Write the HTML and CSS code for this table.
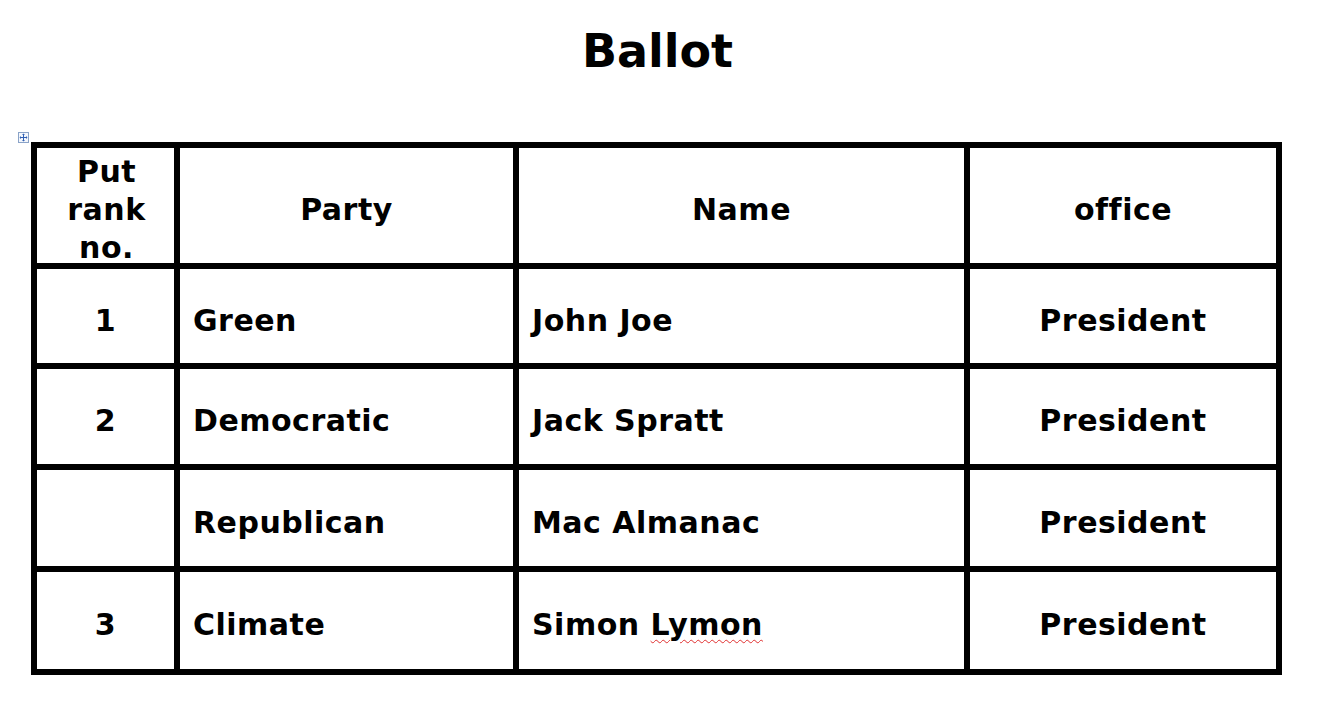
FILE: index.html
```html
<!DOCTYPE html>
<html lang="en">
<head>
<meta charset="utf-8">
<title>Ballot</title>
<link rel="stylesheet" href="styles.css">
</head>
<body>
<main class="page">
  <h1 class="title">Ballot</h1>
  <div class="table-wrap">
    <span class="move-handle" aria-hidden="true">
      <svg width="11" height="11" viewBox="0 0 11 11">
        <rect x="0.5" y="0.5" width="10" height="10" fill="#f4f7fc" stroke="#8aa3c8"/>
        <path d="M5.5 2v7M2 5.5h7" stroke="#2f5fb3" stroke-width="1"/>
        <path d="M5.5 1.5l1.5 1.5h-3zM5.5 9.5l1.5-1.5h-3zM1.5 5.5l1.5-1.5v3zM9.5 5.5l-1.5-1.5v3z" fill="#2f5fb3"/>
      </svg>
    </span>
    <div class="ballot">
      <div class="cell center multi"><span>Put<br>rank<br>no.</span></div>
      <div class="cell center"><span>Party</span></div>
      <div class="cell center"><span>Name</span></div>
      <div class="cell center"><span>office</span></div>

      <div class="cell center"><span>1</span></div>
      <div class="cell left"><span>Green</span></div>
      <div class="cell left"><span>John Joe</span></div>
      <div class="cell center"><span>President</span></div>

      <div class="cell center"><span>2</span></div>
      <div class="cell left"><span>Democratic</span></div>
      <div class="cell left"><span>Jack Spratt</span></div>
      <div class="cell center"><span>President</span></div>

      <div class="cell center"></div>
      <div class="cell left"><span>Republican</span></div>
      <div class="cell left"><span>Mac Almanac</span></div>
      <div class="cell center"><span>President</span></div>

      <div class="cell center"><span>3</span></div>
      <div class="cell left"><span>Climate</span></div>
      <div class="cell left"><span>Simon <span class="spell">Lymon</span></span></div>
      <div class="cell center"><span>President</span></div>
    </div>
    <span class="resize-handle" aria-hidden="true"></span>
  </div>
</main>
</body>
</html>
```

FILE: styles.css
```css
html, body {
  margin: 0;
  padding: 0;
  background: #ffffff;
}

body {
  font-family: "DejaVu Sans", Verdana, sans-serif;
  color: #000000;
}

.page {
  display: flex;
  flex-direction: column;
  padding-top: 25px;
}

.title {
  margin: 0 0 64px 0;
  font-size: 46px;
  line-height: 53px;
  font-weight: bold;
  text-align: center;
  padding-right: 6px;
}

.table-wrap {
  position: relative;
  margin-left: 31px;
  width: 1251px;
}

.move-handle {
  position: absolute;
  left: -13px;
  top: -10px;
  width: 11px;
  height: 11px;
  line-height: 0;
}

.resize-handle {
  position: absolute;
  right: -4px;
  bottom: -10px;
  width: 4px;
  height: 4px;
  border: 1px solid #8c8c8c;
  background: #ffffff;
}

.ballot {
  display: grid;
  grid-template-columns: 137px 333px 445px 306px;
  grid-template-rows: 115px 94px 95px 96px 97px;
  gap: 6px;
  padding: 6px;
  background: #000000;
}

.cell {
  background: #ffffff;
  display: flex;
  align-items: center;
  font-size: 30px;
  font-weight: bold;
  letter-spacing: 0.5px;
  line-height: 38px;
  padding-top: 9px;
  box-sizing: border-box;
}

.cell.center {
  justify-content: center;
  text-align: center;
}

.cell.left {
  padding-left: 13px;
}

.cell.multi {
  padding-top: 8px;
  padding-left: 2px;
}

.spell {
  text-decoration: underline wavy #e03030;
  text-decoration-thickness: 1px;
  text-underline-offset: 4px;
}
```
